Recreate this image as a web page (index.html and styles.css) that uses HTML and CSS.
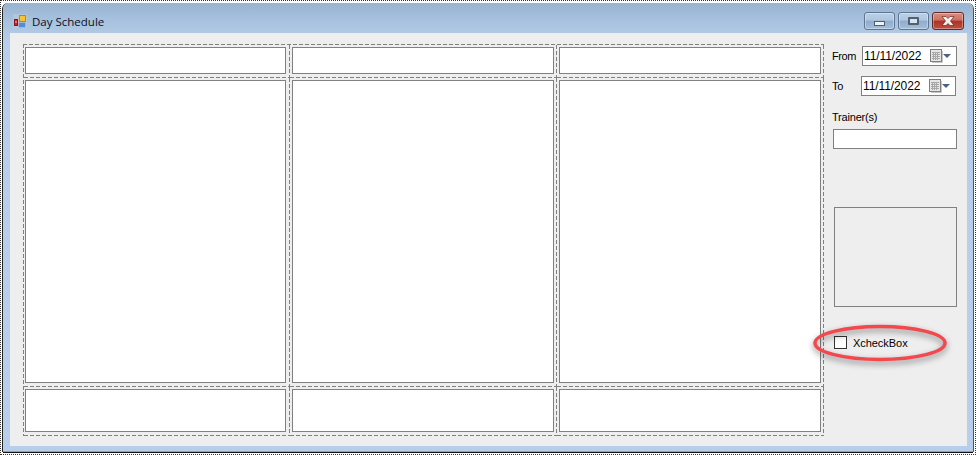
FILE: index.html
```html
<!DOCTYPE html>
<html lang="en">
<head>
<meta charset="utf-8">
<title>Day Schedule</title>
<link rel="stylesheet" href="styles.css">
</head>
<body>
<div class="shot">
  <div class="window">
    <div class="titlebar">
      <svg class="app-icon" width="14" height="14" viewBox="0 0 14 14">
        <rect x="0" y="0" width="14" height="14" fill="#c4cbd6" opacity=".55"/>
        <rect x="6.500" y="1.500" width="6" height="6" fill="#f5c430" stroke="#b98a18"/>
        <rect x="1.500" y="5.500" width="3" height="6" fill="#d8201c" stroke="#8c1512"/>
        <rect x="2.500" y="7" width="1" height="2" fill="#f6c8c0"/>
        <rect x="6" y="9" width="6" height="4" fill="#4f8fe0" stroke="#5f88c0" stroke-width=".5"/>
      </svg>
      <span class="title">Day Schedule</span>
      <div class="controls">
        <div class="ctl ctl-min"><span class="min-glyph"></span></div>
        <div class="ctl ctl-max"><span class="max-glyph"></span></div>
        <div class="ctl ctl-close">
          <svg width="16" height="10" viewBox="0 0 16 10"><path d="M2 .5h4l2 2 2-2h4L10.500 5 14 9.500h-4l-2-2-2 2H2L5.500 5z" fill="#f4eeec" stroke="#6e2a22" stroke-width=".7"/></svg>
        </div>
      </div>
    </div>
    <div class="client">
      <div class="grid">
        <div class="cell"><div class="box"></div></div>
        <div class="cell"><div class="box"></div></div>
        <div class="cell"><div class="box"></div></div>
        <div class="cell"><div class="box"></div></div>
        <div class="cell"><div class="box"></div></div>
        <div class="cell"><div class="box"></div></div>
        <div class="cell"><div class="box"></div></div>
        <div class="cell"><div class="box"></div></div>
        <div class="cell"><div class="box"></div></div>
      </div>
      <div class="side">
        <div class="date-row">
          <span class="lbl lbl-from">From</span>
          <div class="date date-from">
            <span class="date-text">11/11/2022</span>
            <svg class="cal" width="14" height="15" viewBox="0 0 14 15"><rect x=".5" y=".5" width="11" height="12" fill="#e6e6e6" stroke="#7f7f7f"/><path d="M2 3.500h8M2 5.500h8M2 7.500h8M2 9.500h8M3.500 3v8M5.500 3v8M7.500 3v8" stroke="#a8a8a8" stroke-width="1"/><path d="M12.500 2v11.500H2" stroke="#c8c8c8" fill="none"/></svg>
            <svg class="arrow" width="8" height="4" viewBox="0 0 8 4"><path d="M0 0h8L4 4z" fill="#4d6185"/></svg>
          </div>
        </div>
        <div class="date-row date-row-to">
          <span class="lbl lbl-to">To</span>
          <div class="date date-to">
            <span class="date-text">11/11/2022</span>
            <svg class="cal" width="14" height="15" viewBox="0 0 14 15"><rect x=".5" y=".5" width="11" height="12" fill="#e6e6e6" stroke="#7f7f7f"/><path d="M2 3.500h8M2 5.500h8M2 7.500h8M2 9.500h8M3.500 3v8M5.500 3v8M7.500 3v8" stroke="#a8a8a8" stroke-width="1"/><path d="M12.500 2v11.500H2" stroke="#c8c8c8" fill="none"/></svg>
            <svg class="arrow" width="8" height="4" viewBox="0 0 8 4"><path d="M0 0h8L4 4z" fill="#4d6185"/></svg>
          </div>
        </div>
        <span class="lbl lbl-trainer">Trainer(s)</span>
        <div class="textbox"></div>
        <div class="picture"></div>
        <label class="check">
          <span class="check-box"></span>
          <span class="check-text">XcheckBox</span>
        </label>
      </div>
    </div>
  </div>
  <svg class="oval" width="150" height="50" viewBox="0 0 150 50">
    <ellipse cx="72" cy="22" rx="65" ry="16.500" fill="none" stroke="#f2484e" stroke-width="3.500"/>
  </svg>
</div>
</body>
</html>
```
FILE: styles.css
```css
* { box-sizing: border-box; }
html, body { margin: 0; padding: 0; background: #fff; }
body { width: 976px; height: 455px; overflow: hidden; }

.shot {
  position: relative;
  width: 976px;
  height: 455px;
  padding: 2px;
  border: 1px dotted #333;
  font-family: "Liberation Sans", Arial, sans-serif;
  font-size: 11px;
  color: #000;
}

.window {
  display: flex;
  flex-direction: column;
  width: 970px;
  height: 449px;
  padding: 0 6px 5px 7px;
  border-radius: 6px 6px 0 0;
  background: linear-gradient(180deg, #98b4d1 0, #a9c3e0 20px, #b7cfea 40px, #b7cfea 100%);
  border-bottom: 1px solid #45c4e0;
  box-shadow: -1px 0 0 #222, 1px 0 0 #555, 0 1px 0 #111;
}

.titlebar {
  display: flex;
  align-items: center;
  height: 30px;
  flex: none;
  padding: 10px 0 4px 3px;
}

.app-icon { flex: none; }

.title {
  margin: 1px 0 0 5px;
  font-family: "Open Sans", sans-serif;
  font-size: 11.5px;
  color: #0a0f1e;
}

.controls {
  display: flex;
  gap: 3px;
  margin-left: auto;
  margin-right: 3px;
}

.ctl {
  display: flex;
  align-items: center;
  justify-content: center;
  width: 31px;
  height: 18px;
  border: 1px solid #5d7591;
  border-radius: 3px;
  background: linear-gradient(180deg, #bcd0e6 0, #aec6df 45%, #8facca 50%, #a3bedb 100%);
  box-shadow: inset 0 0 0 1px rgba(255,255,255,.35);
}

.ctl-close {
  width: 32px;
  border-color: #5f2a2c;
  background: linear-gradient(180deg, #d98d80 0, #cb7061 45%, #ac3224 50%, #c04f40 100%);
}

.min-glyph {
  display: block;
  width: 11px;
  height: 5px;
  margin-top: 4px;
  background: #eef2f6;
  border: 1px solid #4f6070;
}

.max-glyph {
  display: block;
  width: 11px;
  height: 8px;
  background: #d8e3ee;
  border: 2px solid #4f6070;
  border-radius: 1px;
}

.client {
  display: flex;
  flex: 1;
  padding: 11px 0 0 13px;
  background: #eeeeee;
}

.grid {
  display: grid;
  grid-template-columns: 266px 267px 267px;
  grid-template-rows: 33px 309px 49px;
  width: 801px;
  height: 392px;
  background-image:
    repeating-linear-gradient(90deg, #808080 0 4px, transparent 4px 6px),
    repeating-linear-gradient(180deg, #808080 0 4px, transparent 4px 6px);
  background-repeat: no-repeat;
  background-size: 100% 1px, 1px 100%;
  background-position: 0 0, 0 0;
  padding: 1px 0 0 1px;
}

.cell {
  padding: 2px 3px 4px 2px;
  background-image:
    repeating-linear-gradient(90deg, #808080 0 4px, transparent 4px 6px),
    repeating-linear-gradient(180deg, #808080 0 4px, transparent 4px 6px);
  background-repeat: no-repeat;
  background-size: 100% 1px, 1px 100%;
  background-position: 0 100%, 100% 0;
}

.cell:nth-child(3n+1) { padding: 2px 4px 4px 1px; }

.box {
  width: 100%;
  height: 100%;
  background: #fff;
  border: 1px solid #808080;
}

.side {
  display: flex;
  flex-direction: column;
  align-items: flex-start;
  padding: 2px 0 0 8px;
  width: 142px;
}

.date-row {
  display: flex;
  align-items: center;
  height: 20px;
}

.date-row-to { margin-top: 10px; }

.lbl { white-space: nowrap; letter-spacing: -.2px; }
.lbl-from { width: 30px; letter-spacing: -.4px; }
.lbl-to { width: 29px; }

.date {
  display: flex;
  align-items: center;
  width: 95px;
  height: 20px;
  padding-left: 1px;
  background: #fff;
  border: 1px solid #808080;
}

.date-text {
  width: 66px;
  flex: none;
  font-size: 12px;
  letter-spacing: -.1px;
  color: #000;
}

.cal { flex: none; margin-top: 1px; }
.arrow { flex: none; margin-left: -1px; }

.lbl-trainer { margin-top: 14px; line-height: 14px; }

.textbox {
  width: 124px;
  height: 20px;
  margin: 5px 0 0 1px;
  background: #fff;
  border: 1px solid #808080;
}

.picture {
  width: 123px;
  height: 100px;
  margin: 58px 0 0 2px;
  border: 1px solid #808080;
}

.check {
  display: flex;
  align-items: center;
  margin: 29px 0 0 2px;
}

.check-box {
  width: 13px;
  height: 13px;
  background: #fff;
  border: 1px solid #333;
}

.check-text { margin-left: 6px; letter-spacing: -.05px; }

.oval {
  position: absolute;
  left: 807px;
  top: 320px;
  filter: drop-shadow(0 3px 3px rgba(0,0,0,.45));
}
```
